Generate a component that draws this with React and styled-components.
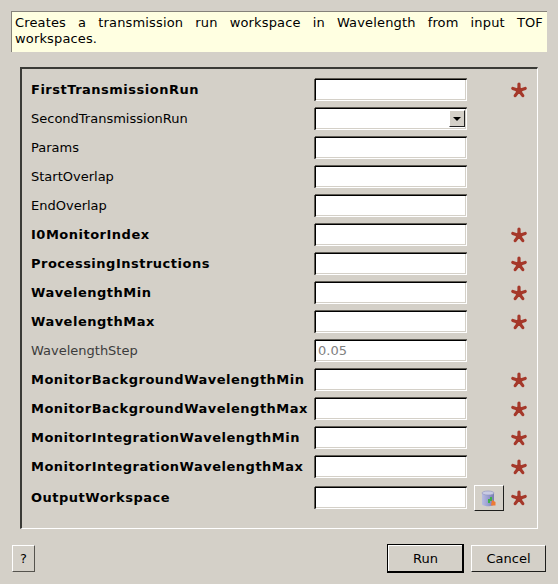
import React from 'react'
import styled, { createGlobalStyle } from 'styled-components'

const GlobalStyle = createGlobalStyle`
  html, body {
    margin: 0;
    padding: 0;
    background: #d4d0c8;
  }
  body {
    font-family: 'DejaVu Sans', sans-serif;
    font-size: 13px;
    color: #000;
  }
`

const fields = [
  { name: 'FirstTransmissionRun', required: true },
  { name: 'SecondTransmissionRun', combo: true },
  { name: 'Params' },
  { name: 'StartOverlap' },
  { name: 'EndOverlap' },
  { name: 'I0MonitorIndex', required: true },
  { name: 'ProcessingInstructions', required: true },
  { name: 'WavelengthMin', required: true },
  { name: 'WavelengthMax', required: true },
  { name: 'WavelengthStep', value: '0.05', dim: true },
  { name: 'MonitorBackgroundWavelengthMin', required: true },
  { name: 'MonitorBackgroundWavelengthMax', required: true },
  { name: 'MonitorIntegrationWavelengthMin', required: true },
  { name: 'MonitorIntegrationWavelengthMax', required: true },
]

const Star = () => (
  <StarIcon viewBox="0 0 16 16">
    <path d="M8 4.6 L11.8 7.4 L10.4 11.9 L5.6 11.9 L4.2 7.4 Z" fill="#a5382a" />
    <g stroke="#a5382a" strokeWidth="3.2" strokeLinecap="round" fill="none">
      <path d="M8 8.5 L8 2" />
      <path d="M8 8.5 L14.2 6.4" />
      <path d="M8 8.5 L11.8 13.6" />
      <path d="M8 8.5 L4.2 13.6" />
      <path d="M8 8.5 L1.8 6.4" />
    </g>
  </StarIcon>
)

const WorkspaceIcon = () => (
  <svg width="16" height="17" viewBox="0 0 16 17">
    <defs>
      <linearGradient id="drum" x1="0" x2="1" y1="0" y2="0">
        <stop offset="0" stopColor="#b9bce0" />
        <stop offset="0.5" stopColor="#9a9ed2" />
        <stop offset="1" stopColor="#777ab0" />
      </linearGradient>
    </defs>
    <path d="M1 3 v11 c0 1.3 2.7 2.2 6 2.2 s6 -0.9 6 -2.2 v-11 z" fill="url(#drum)" />
    <ellipse cx="7" cy="3" rx="6" ry="2" fill="#c9cbe4" stroke="#8e92bc" strokeWidth="0.6" />
    <path d="M7 9 h2 v-2 h2 v4 h-2 v2 h-2 z" fill="#3fae4a" />
    <path d="M11 10 l3.5 2 v3.5 h-4.5 z" fill="#ee7a35" />
  </svg>
)

const App = () => (
  <>
    <GlobalStyle />
    <Dialog>
      <InfoBox>
        Creates a transmission run workspace in Wavelength from input TOF workspaces.
      </InfoBox>
      <Frame>
        {fields.map((field) => (
          <Row key={field.name}>
            <Label bold={field.required} dim={field.dim}>{field.name}</Label>
            <InputBox dim={field.dim}>
              {field.value}
              {field.combo && (
                <ComboButton>
                  <ComboArrow />
                </ComboButton>
              )}
            </InputBox>
            <Spacer />
            <StarSlot>{field.required && <Star />}</StarSlot>
          </Row>
        ))}
        <OutputRow>
          <Label bold>OutputWorkspace</Label>
          <InputBox />
          <IconButton>
            <WorkspaceIcon />
          </IconButton>
          <StarSlot>
            <Star />
          </StarSlot>
        </OutputRow>
      </Frame>
      <Footer>
        <HelpButton>?</HelpButton>
        <FooterRight>
          <RunButton>Run</RunButton>
          <CancelButton>Cancel</CancelButton>
        </FooterRight>
      </Footer>
    </Dialog>
  </>
)

const Dialog = styled.div`
  display: flex;
  flex-direction: column;
  width: 558px;
  height: 584px;
  padding: 11px 11px 0 11px;
  box-sizing: border-box;
  background: #d4d0c8;
`

const InfoBox = styled.div`
  width: 536px;
  height: 41px;
  box-sizing: border-box;
  padding: 3px 4px 0 3px;
  background: #ffffe1;
  border-left: 1px solid #85827a;
  border-top: 1px solid #85827a;
  line-height: 16px;
  letter-spacing: 0.15px;
  text-align: justify;
`

const Frame = styled.div`
  display: flex;
  flex-direction: column;
  gap: 7px;
  width: 518px;
  height: 462px;
  margin: 15px 0 0 9px;
  padding: 10px 10px 0 9px;
  box-sizing: border-box;
  border-top: 2px solid #3a3a36;
  border-left: 2px solid #3a3a36;
  border-right: 1px solid #fff;
  border-bottom: 1px solid #fff;
`

const Row = styled.div`
  display: flex;
  align-items: center;
  height: 22px;
`

const OutputRow = styled(Row)`
  height: 26px;
`

const Label = styled.div`
  width: 284px;
  flex: none;
  margin-top: -2px;
  white-space: nowrap;
  font-weight: ${({ bold }) => (bold ? 700 : 400)};
  letter-spacing: ${({ bold }) => (bold ? '0.5px' : '0')};
  color: ${({ dim }) => (dim ? '#3c3c3c' : '#000')};
`

const InputBox = styled.div`
  position: relative;
  width: 152px;
  height: 22px;
  flex: none;
  box-sizing: border-box;
  padding: 1px 0 0 2px;
  line-height: 17px;
  background: #fff;
  color: ${({ dim }) => (dim ? '#808080' : '#000')};
  border-top: 1px solid #000;
  border-left: 1px solid #000;
  border-right: 1px solid #fff;
  border-bottom: 1px solid #fff;
  box-shadow: inset -1px -1px 0 #d4d0c8, 0 -1px 0 #5f5c55, -1px 0 0 #5f5c55;
`

const ComboButton = styled.div`
  position: absolute;
  top: 1px;
  right: 1px;
  display: flex;
  align-items: center;
  justify-content: center;
  width: 16px;
  height: 17px;
  box-sizing: border-box;
  background: #d4d0c8;
  border-top: 1px solid #fff;
  border-left: 1px solid #fff;
  border-right: 1px solid #222;
  border-bottom: 1px solid #222;
`

const ComboArrow = styled.span`
  width: 0;
  height: 0;
  border-left: 4px solid transparent;
  border-right: 4px solid transparent;
  border-top: 4px solid #000;
`

const Spacer = styled.div`
  width: 44px;
  flex: none;
`

const StarSlot = styled.div`
  display: flex;
  align-items: center;
  width: 16px;
  height: 16px;
  flex: none;
`

const StarIcon = styled.svg`
  display: block;
  width: 16px;
  height: 16px;
`

const RaisedButton = styled.button`
  display: flex;
  align-items: center;
  justify-content: center;
  box-sizing: border-box;
  padding: 0;
  font: inherit;
  color: #000;
  background: #d4d0c8;
  border-top: 1px solid #fff;
  border-left: 1px solid #fff;
  border-right: 1px solid #1e1e1c;
  border-bottom: 1px solid #1e1e1c;
  border-radius: 0;
`

const IconButton = styled(RaisedButton)`
  width: 30px;
  height: 26px;
  margin: 0 7px;
  flex: none;
`

const Footer = styled.div`
  display: flex;
  justify-content: space-between;
  align-items: center;
  margin-top: 15px;
  width: 535px;
`

const FooterRight = styled.div`
  display: flex;
  align-items: center;
  gap: 7px;
`

const HelpButton = styled(RaisedButton)`
  width: 23px;
  height: 27px;
  margin-left: 1px;
  border-right-color: #55534e;
  border-bottom-color: #55534e;
`

const CancelButton = styled(RaisedButton)`
  width: 75px;
  height: 27px;
`

const RunButton = styled(RaisedButton)`
  width: 77px;
  height: 29px;
  padding-left: 1px;
  border-top: 1px solid #000;
  border-left: 1px solid #000;
  border-right: 2px solid #000;
  border-bottom: 2px solid #000;
  box-shadow: inset 1px 1px 0 #fff;
`

export default App
